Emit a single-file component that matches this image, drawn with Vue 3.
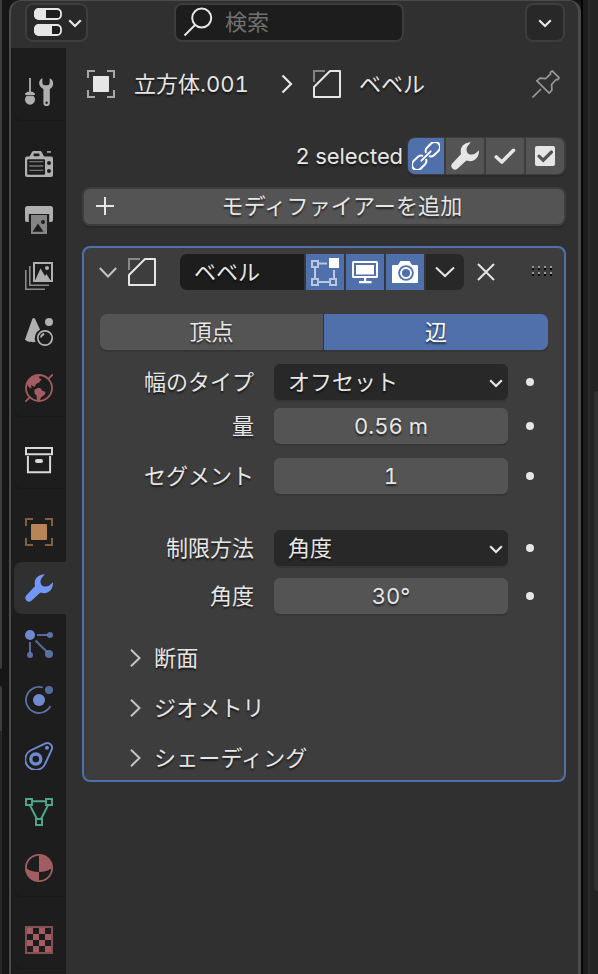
<script setup>
import { ref } from "vue";

const wrench =
  '<path d="M19.8 .2C14 .4 9.6 4 9.7 9.2c0 1.6.4 2.8.4 2.8L1.2 21.6a3.7 3.7 0 0 0 5.2 5.2l9-8.2c1 .4 2 .6 3.6.6 5.400 0 9.200-4.700 9-10.900-1.500 1.200-2.800 3-4.600 3.800-2 .9-5 .5-6.300-.7-1.700-1.500-2.100-4.800-.8-6.700C17.200 3 18.800 1.600 19.800 .2z" fill="currentColor"/>';

const icons = {
  wrench,
  tool: `<path d="M5 0v14" stroke="currentColor" stroke-width="1.8"/>
    <path d="M2.500 13.800h5l2.500 1.600v1.200l-1.800 1.200A5 5 0 1 1 1.800 17.800L0 16.600v-1.200z" fill="currentColor"/>
    <path d="M0 17.600h10" stroke="#1d1d1d" stroke-width=".8"/>
    <path d="M17.400.2C13 2 12.800 8.600 18.400 11v14a3.200 3.200 0 0 0 6.400 0V11C29.400 8.600 29.200 2 24.700.2V5a2.500 2.500 0 0 1-2.500 2.200h-2.300A2.500 2.500 0 0 1 17.400 5z" fill="currentColor"/>
    <circle cx="21.600" cy="24.800" r="1.200" fill="#1d1d1d"/>`,
  render: `<path d="M4 7.500 7 2q.6-1 1.800-1H15q1.200 0 1.700 1L19.500 7.500z" fill="currentColor"/>
    <rect x="8.500" y="3.600" width="6" height="3" rx="1" fill="#1d1d1d"/>
    <rect x="22" y="1.200" width="4" height="1.500" fill="currentColor"/>
    <rect y="6.500" width="28" height="20.500" rx="2" fill="currentColor"/>
    <rect x="2.200" y="9.200" width="17.800" height="15.500" rx="1" fill="#1d1d1d"/>
    <path d="M4.300 11.700h14M4.300 16h14M4.300 20.400h14" stroke="#777" stroke-width="1.300"/>
    <circle cx="24" cy="13" r="2" fill="#1d1d1d"/><circle cx="24" cy="21" r="2" fill="#1d1d1d"/>`,
  output: `<path d="M2.500 0h23A2.500 2.500 0 0 1 28 2.500V14q0 2-2 2h-1.800V8H3.800v8H2q-2 0-2-2V2.500A2.500 2.500 0 0 1 2.500 0z" fill="currentColor"/>
    <path d="M6 9h16v19H6z" fill="#858585"/>
    <path d="M7.500 25.800 13 17.500l5.500 8.300z" fill="#1d1d1d"/><circle cx="18" cy="16" r="2" fill="#1d1d1d"/>`,
  layers: `<path d="M.8 8v19.200H20M4.800 4v19.200H24" fill="none" stroke="#8a8a8a" stroke-width="1.600"/>
    <rect x="9" y="1" width="18" height="18" fill="none" stroke="currentColor" stroke-width="2"/>
    <path d="M10 18.500 15.500 6.500 20 14l1.500-2L25.500 18.500z" fill="currentColor"/><circle cx="22" cy="6" r="2" fill="currentColor"/>`,
  scene: `<path d="M8.700 0q1 0 1.500 1.200L15 11.500A10 10 0 0 0 10.500 24C6 24.500 1 23.500 0 21.500L7.200 1.200Q7.700 0 8.700 0z" fill="currentColor"/>
    <circle cx="24" cy="4" r="4" fill="currentColor"/>
    <circle cx="20" cy="20" r="7.200" fill="none" stroke="currentColor" stroke-width="1.700"/>
    <path d="M16 19.500a4 4 0 0 1 3.200-3.500" fill="none" stroke="currentColor" stroke-width="1.800"/>`,
  world: `<circle cx="14" cy="14" r="13" fill="none" stroke="currentColor" stroke-width="1.800"/>
    <path d="M28 .2 23.800 4.400M.2 27.800 4.400 23.600" stroke="currentColor" stroke-width="1.800"/>
    <path d="M4 6 8 2.500 14.500 2l-.5 2 2.500 1.500-2.500 3-3 1.500-1.500 3-3.500-2 .5 3.500-3-1.500L2 9.500z" fill="currentColor"/>
    <path d="M9.500 15.500l4-1.800 2.500.8 1 2 3.500 1.500-1 3-3 2-2.500 4-2-.5-.5-5-2-2z" fill="currentColor"/>`,
  collection: `<path d="M1 2h26v6.200H1zM2.900 10v16.200h22.200V10" fill="none" stroke="currentColor" stroke-width="2"/>
    <rect x="10" y="13" width="8" height="4" rx="2" fill="currentColor"/>`,
  object: `<path d="M1 8V1h7M20 1h7v7M27 20v7h-7M8 27H1v-7" fill="none" stroke="currentColor" stroke-width="2" opacity=".65"/>
    <rect x="6" y="6" width="16" height="16" rx=".8" fill="currentColor"/>`,
  particles: `<g opacity=".7" stroke="currentColor" stroke-width="2"><path d="M12 5h11M5 12v11M10.500 10.500 22 22"/></g>
    <g fill="currentColor"><circle cx="5" cy="5" r="5"/><g opacity=".75"><circle cx="25" cy="5" r="3"/><circle cx="5" cy="25" r="3"/><circle cx="24" cy="24" r="4"/></g></g>`,
  physics: `<path d="M17.700 1.500A13 13 0 1 0 25.500 20" fill="none" stroke="currentColor" stroke-width="1.800" opacity=".75"/>
    <circle cx="14" cy="14" r="6" fill="currentColor"/><circle cx="24" cy="4" r="4" fill="currentColor" opacity=".7"/>`,
  constraint: `<path d="M20.500 1.400 5.500 8.500A10.400 10.400 0 1 0 20.300 21.500L26.800 7.500A4.800 4.800 0 0 0 20.500 1.400z" fill="none" stroke="currentColor" stroke-width="1.900"/>
    <circle cx="10.800" cy="17" r="5" fill="none" stroke="currentColor" stroke-width="3.300"/><circle cx="22" cy="5.700" r="2" fill="currentColor"/>`,
  mesh: `<path d="M1 1h6v6H1zM21 1h6v6h-6zM11 21h6v6h-6zM7 3.200h14M4.800 7 12 21M23.200 7 16 21" fill="none" stroke="currentColor" stroke-width="1.900"/>`,
  material: `<circle cx="14" cy="14" r="13.100" fill="none" stroke="currentColor" stroke-width="1.800"/>
    <path d="M14 1A13 13 0 0 1 27 14Q22 18 14 18zM14 27A13 13 0 0 1 1 14Q6 18 14 18z" fill="currentColor"/>`,
  texture: `<rect x="1" y="1" width="26" height="26" fill="none" stroke="currentColor" stroke-width="2" opacity=".8"/>
    <path d="M2 2h6v6H2zM14 2h6v6h-6zM8 8h6v6H8zM20 8h6v6h-6zM2 14h6v6H2zM14 14h6v6h-6zM8 20h6v6H8zM20 20h6v6h-6z" fill="currentColor"/>`,
  bevel: `<path d="M1 12V1h11" fill="none" stroke="currentColor" stroke-width="2" opacity=".45"/>
    <path d="M17 1h10v26H1V17z" fill="none" stroke="currentColor" stroke-width="2" stroke-linejoin="round"/>`,
  pin: `<path d="M.5 27.500 9 19M20.200.8l7 7-1.400 1.900-1.700-.2-4.500 5 .3 5.500-2.700 3.200L4.900 10.900l3.100-2.700 5.500.4 5-4.500-.2-1.700z" fill="none" stroke="currentColor" stroke-width="1.700" stroke-linejoin="round"/>`,
  link: `<g transform="rotate(-45 14 14)" fill="none" stroke="currentColor" stroke-width="2" stroke-linecap="round">
    <path d="M11.500 11.200Q10 8.800 7.500 8.800H1.500a5.200 5.200 0 0 0 0 10.400h6q2.500 0 4-2.400M16.500 11.200Q18 8.800 20.500 8.800h6a5.200 5.200 0 0 1 0 10.400h-6q-2.500 0-4-2.400M7.500 14h13"/></g>`,
  check: `<path d="M5.300 15l5.500 5L22.500 8.300" fill="none" stroke="currentColor" stroke-width="3.600" stroke-linecap="round" stroke-linejoin="round"/>`,
  checkbox: `<rect x="4" y="4" width="20" height="20" rx="2" fill="currentColor"/>
    <path d="M8 14.200l4.200 4L20.500 10" fill="none" stroke="#545454" stroke-width="3.200" stroke-linecap="round"/>`,
  edit: `<g fill="none" stroke="#b9c6e2" stroke-width="2"><path d="M1 3h6v6H1zM1 21h6v6H1zM19 21h6v6h-6zM8 5.500h8M4 10v10M8 24h10M23 12v8"/></g>
    <path d="M18 0h10v10H18z" fill="currentColor"/>`,
  monitor: `<rect x="2" y="4" width="24" height="15" rx=".5" fill="none" stroke="currentColor" stroke-width="2"/>
    <path d="M5 7h18v9.500H5zM13 20h2.200v3H13zM8 23h12.500v2.200H8z" fill="currentColor"/>`,
  camera: `<path d="M1 8q0-1 1-1h5l2.500-4h9L21 7h5q1 0 1 1v17H1z" fill="currentColor"/>
    <circle cx="15" cy="15" r="7.800" fill="#5070ab"/><circle cx="15" cy="15" r="5" fill="none" stroke="currentColor" stroke-width="1.900"/>`,
};

const tabGroups = [
  [{ icon: "tool", color: "gray" }],
  [
    { icon: "render", color: "gray" },
    { icon: "output", color: "gray" },
    { icon: "layers", color: "gray" },
    { icon: "scene", color: "gray" },
    { icon: "world", color: "red" },
  ],
  [{ icon: "collection", color: "white" }],
  [
    { icon: "object", color: "orange" },
    { icon: "wrench", color: "bright" },
    { icon: "particles", color: "blue" },
    { icon: "physics", color: "blue" },
    { icon: "constraint", color: "blue" },
    { icon: "mesh", color: "green" },
    { icon: "material", color: "red" },
  ],
  [{ icon: "texture", color: "red" }],
];

const activeTab = ref("wrench");
const affect = ref("辺");

const rows = [
  { label: "幅のタイプ", value: "オフセット", select: true },
  { label: "量", value: "0.56 m" },
  { label: "セグメント", value: "1", cls: "spaced" },
  { label: "制限方法", value: "角度", select: true, cls: "section" },
  { label: "角度", value: "30°", cls: "loose" },
];

const subPanels = ["断面", "ジオメトリ", "シェーディング"];
</script>

<template>
  <div class="screen">
    <div class="edge-left">
      <div class="edge-top"></div>
      <div class="edge-bottom"></div>
    </div>

    <div class="editor">
      <header class="header">
        <button class="head-btn type-btn">
          <svg width="28" height="28" viewBox="0 0 28 28">
            <rect x="1" y="1" width="26" height="10" rx="4" fill="#1d1d1d" stroke="#e6e6e6" stroke-width="1.800" />
            <path d="M12 0H5a5 5 0 0 0-5 5v2a5 5 0 0 0 5 5h7z" fill="#e6e6e6" />
            <rect x="1" y="17" width="26" height="10" rx="4" fill="#1d1d1d" stroke="#e6e6e6" stroke-width="1.800" />
            <path d="M18 16H5a5 5 0 0 0-5 5v2a5 5 0 0 0 5 5h13z" fill="#e6e6e6" />
          </svg>
          <svg class="caret" width="14" height="9" viewBox="0 0 14 9"><path d="M1.200 1.200 7 7l5.800-5.800" /></svg>
        </button>
        <div class="search">
          <svg width="30" height="30" viewBox="0 0 30 30" fill="none" stroke="#e6e6e6" stroke-width="2">
            <circle cx="18.700" cy="11" r="9.500" />
            <path d="M12 18 1.500 28.500" />
          </svg>
          <span>検索</span>
        </div>
        <button class="head-btn options-btn">
          <svg class="caret" width="14" height="9" viewBox="0 0 14 9"><path d="M1.200 1.200 7 7l5.800-5.800" /></svg>
        </button>
      </header>

      <div class="main">
        <nav class="tabs">
          <div v-for="(group, i) in tabGroups" :key="i" class="tab-group">
            <div
              v-for="tab in group"
              :key="tab.icon"
              class="tab"
              :class="[tab.color, { active: tab.icon === activeTab }]"
              @click="activeTab = tab.icon"
            >
              <svg width="28" height="28" viewBox="0 0 28 28" v-html="icons[tab.icon]"></svg>
            </div>
          </div>
        </nav>

        <section class="body">
          <div class="crumbs">
            <svg width="28" height="28" viewBox="0 0 28 28" v-html="icons.object"></svg>
            <span class="crumb-object">立方体.001</span>
            <svg class="crumb-sep" width="12" height="20" viewBox="0 0 12 20"><path d="M1.500 1.500 10 10l-8.500 8.500" /></svg>
            <svg width="28" height="28" viewBox="0 0 28 28" v-html="icons.bevel"></svg>
            <span class="crumb-mod">ベベル</span>
            <svg class="pin" width="28" height="28" viewBox="0 0 28 28" v-html="icons.pin"></svg>
          </div>

          <div class="selected">
            <span>2 selected</span>
            <div class="tools">
              <div
                v-for="name in ['link', 'wrench', 'check', 'checkbox']"
                :key="name"
                class="tool"
                :class="{ on: name === 'link' }"
              >
                <svg width="28" height="28" viewBox="0 0 28 28" v-html="icons[name]"></svg>
              </div>
            </div>
          </div>

          <button class="add">
            <svg width="18" height="18" viewBox="0 0 18 18"><path d="M9 0v18M0 9h18" /></svg>
            <span>モディファイアーを追加</span>
          </button>

          <div class="panel">
            <div class="panel-head">
              <svg class="chev" width="18" height="11" viewBox="0 0 18 11"><path d="M.8 1 9 9.500 17.200 1" /></svg>
              <svg class="mod-icon" width="28" height="28" viewBox="0 0 28 28" v-html="icons.bevel"></svg>
              <div class="controls">
                <div class="name">ベベル</div>
                <div v-for="name in ['edit', 'monitor', 'camera']" :key="name" class="mode">
                  <svg width="28" height="28" viewBox="0 0 28 28" v-html="icons[name]"></svg>
                </div>
                <div class="more">
                  <svg width="20" height="12" viewBox="0 0 20 12"><path d="M1 1.500 10 10l9-8.500" /></svg>
                </div>
              </div>
              <svg class="close" width="18" height="18" viewBox="0 0 18 18"><path d="M1 1l16 16M17 1 1 17" /></svg>
              <div class="grip"><i v-for="n in 8" :key="n"></i></div>
            </div>

            <div class="toggle">
              <div
                v-for="item in ['頂点', '辺']"
                :key="item"
                class="option"
                :class="{ on: item === affect }"
                @click="affect = item"
              >
                {{ item }}
              </div>
            </div>

            <div v-for="row in rows" :key="row.label" class="row" :class="row.cls">
              <label>{{ row.label }}</label>
              <div class="field" :class="{ select: row.select }">
                <span>{{ row.value }}</span>
                <svg v-if="row.select" class="caret" width="14" height="9" viewBox="0 0 14 9">
                  <path d="M1.200 1.200 7 7l5.800-5.800" />
                </svg>
              </div>
              <i class="dot"></i>
            </div>

            <div class="subs">
              <div v-for="sub in subPanels" :key="sub" class="sub">
                <svg class="chev" width="11" height="18" viewBox="0 0 11 18"><path d="M1 .8 9.500 9 1 17.200" /></svg>
                <span>{{ sub }}</span>
              </div>
            </div>
          </div>
        </section>
      </div>
    </div>

    <div class="edge-right">
      <div class="edge-strip"></div>
    </div>
  </div>
</template>

<style>
body {
  margin: 0;
  background: #161616;
}
</style>

<style scoped>
.screen {
  display: flex;
  width: 598px;
  height: 974px;
  overflow: hidden;
  background: #161616;
  color: #e6e6e6;
  font-family: Inter, "Noto Sans CJK JP", sans-serif;
  font-size: 22px;
  font-feature-settings: "tnum";
  line-height: 36px;
  text-shadow: 0 2px 2px rgba(0, 0, 0, 0.6);
  white-space: nowrap;
}

.screen * {
  box-sizing: border-box;
}

svg {
  flex: none;
  display: block;
}

button {
  padding: 0;
  font: inherit;
  color: inherit;
  text-shadow: inherit;
}

.edge-left {
  width: 9px;
  display: flex;
  flex-direction: column;
  justify-content: space-between;
}

.edge-top,
.edge-bottom {
  width: 2px;
  background: #3c3c3c;
}

.edge-top {
  height: 669px;
  border-bottom-right-radius: 2px;
}

.edge-bottom {
  height: 288px;
  border-top-right-radius: 2px;
  background: linear-gradient(#3c3c3c 45px, #282828 45px);
}

.editor {
  width: 572px;
  display: flex;
  flex-direction: column;
  border: solid #4a4a4a;
  border-width: 1px 3px 0 2px;
  border-radius: 12px 12px 0 0;
  background: #303030;
  overflow: hidden;
}

.edge-right {
  flex: 1;
  display: flex;
  justify-content: flex-end;
  align-items: flex-start;
  border-left: 2px solid #060606;
  background: linear-gradient(90deg, #1c1c1c 5px, #2b2b2b 5px, #2b2b2b 7px, #232323 7px);
}

.edge-strip {
  width: 4px;
  height: 500px;
  margin-top: 391px;
  border-radius: 3px 0 0 3px;
  background: #303030;
}

.header {
  height: 47px;
  display: flex;
  align-items: flex-start;
  padding: 2px 13px 0 14px;
}

.head-btn,
.search {
  height: 39px;
  display: flex;
  align-items: center;
  border: 2px solid #3d3d3d;
  border-radius: 8px;
  background: #282828;
}

.type-btn {
  width: 63px;
  padding-left: 7px;
  gap: 6px;
}

.type-btn svg,
.options-btn svg {
  margin-top: -1px;
}

.search {
  width: 230px;
  margin-left: 86px;
  padding: 0 0 2px 7px;
  background: #1d1d1d;
  color: #707070;
  text-shadow: none;
}

.search span {
  margin-left: 12px;
}

.options-btn {
  width: 40px;
  margin-left: auto;
  justify-content: center;
}

.caret {
  fill: none;
  stroke: #e6e6e6;
  stroke-width: 2.2;
  position: relative;
  top: 1px;
}

.main {
  flex: 1;
  display: flex;
}

.tabs {
  width: 55px;
  display: flex;
  flex-direction: column;
  padding: 16px 0 0 3px;
  gap: 16px;
  background: #1d1d1d;
}

.tab-group {
  display: flex;
  flex-direction: column;
  gap: 4px;
  padding: 2px 0;
  border-radius: 0 0 0 8px;
  box-shadow: 0 1px 0 #191919;
}

.tab {
  height: 52px;
  display: flex;
  align-items: center;
  padding-left: 11px;
  border-radius: 8px 0 0 8px;
}

.tab.active {
  background: #303030;
}

.gray {
  color: #b0b0b0;
}

.white {
  color: #d8d8d8;
}

.red {
  color: #a35d62;
}

.orange {
  color: #b98557;
}

.bright {
  color: #7297f4;
}

.blue {
  color: #6f8bd0;
}

.green {
  color: #4fa888;
}

.body {
  flex: 1;
  padding: 16px 12px 0 16px;
}

.crumbs {
  height: 40px;
  display: flex;
  align-items: center;
  padding: 0 6px 0 5px;
}

.crumb-object {
  width: 166px;
  padding-left: 19px;
}

.crumb-sep {
  margin-right: 20px;
  fill: none;
  stroke: #e6e6e6;
  stroke-width: 2.2;
}

.crumb-mod {
  margin-left: 18px;
}

.pin {
  margin-left: auto;
  color: #989898;
}

.selected {
  height: 38px;
  margin-top: 33px;
  display: flex;
  align-items: center;
  justify-content: flex-end;
  gap: 4px;
  letter-spacing: -0.1px;
}

.tools {
  display: flex;
  gap: 2px;
  padding: 1px 2px 1px 1px;
  border-radius: 8px;
  background: #3d3d3d;
  box-shadow: 0 2px 0 #2a2a2a;
}

.tool {
  width: 38px;
  height: 36px;
  display: flex;
  align-items: center;
  justify-content: center;
  background: #545454;
}

.tool.on {
  width: 36px;
  color: #fff;
  background: #5070ab;
}

.tool:first-child {
  border-radius: 7px 0 0 7px;
}

.tool:last-child {
  border-radius: 0 7px 7px 0;
}

.add {
  width: 484px;
  height: 39px;
  margin-top: 12px;
  display: flex;
  align-items: center;
  padding: 0 0 2px 12px;
  border: 2px solid #3d3d3d;
  border-radius: 8px;
  background: #545454;
  box-shadow: 0 2px 0 #2a2a2a;
}

.add svg {
  stroke: #e6e6e6;
  stroke-width: 2;
}

.add span {
  flex: 1;
  padding-left: 6px;
  text-align: center;
  letter-spacing: 0.15px;
}

.panel {
  width: 484px;
  height: 536px;
  margin-top: 20px;
  padding: 6px 16px 0;
  border: 2px solid #5070ab;
  border-radius: 8px;
  background: #3d3d3d;
}

.panel-head {
  height: 36px;
  display: flex;
  align-items: center;
}

.chev {
  fill: none;
  stroke: #c4c4c4;
  stroke-width: 2;
}

.panel-head .chev {
  margin-left: -1px;
}

.mod-icon {
  margin-left: 11px;
}

.controls {
  flex: none;
  display: flex;
  gap: 2px;
  height: 36px;
  margin-left: 24px;
  border-radius: 7px;
  overflow: hidden;
  background: #363636;
}

.name {
  width: 124px;
  padding-left: 14px;
  background: #1d1d1d;
}

.mode,
.more {
  width: 38px;
  display: flex;
  align-items: center;
  justify-content: center;
  color: #fff;
  background: #5070ab;
}

.more {
  background: #282828;
}

.more svg,
.close {
  fill: none;
  stroke: #e6e6e6;
  stroke-width: 2;
}

.close {
  margin-left: 13px;
}

.grip {
  flex: none;
  display: grid;
  grid-template-columns: repeat(4, 2px);
  gap: 4px;
  margin: -4px 0 0 37px;
}

.grip i {
  width: 2px;
  height: 2px;
  background: #999;
  box-shadow: 0 2px 0 #080808;
}

.toggle {
  display: flex;
  gap: 1px;
  margin: 24px 0 14px;
  border-radius: 7px;
  background: #333;
  box-shadow: 0 2px 0 #363636;
}

.option {
  width: 223px;
  height: 36px;
  text-align: center;
  background: #545454;
  border-radius: 7px 0 0 7px;
}

.option:last-child {
  width: 224px;
  border-radius: 0 7px 7px 0;
}

.option.on {
  color: #fff;
  background: #5070ab;
}

.row {
  height: 36px;
  display: flex;
  align-items: center;
  margin-bottom: 8px;
}

.row.spaced {
  margin-top: 14px;
}

.row.section {
  margin-top: 36px;
}

.row.loose {
  margin-top: 12px;
}

.row label {
  width: 154px;
  text-align: right;
}

.field {
  width: 234px;
  height: 36px;
  margin-left: 20px;
  text-align: center;
  border-radius: 6px;
  background: #545454;
  box-shadow: 0 2px 0 #363636;
}

.field.select {
  display: flex;
  align-items: center;
  justify-content: space-between;
  padding: 0 5px 0 14px;
  background: #282828;
}

.dot {
  width: 8px;
  height: 8px;
  margin-left: 18px;
  border-radius: 50%;
  background: #e6e6e6;
}

.subs {
  margin-top: 19px;
}

.sub {
  height: 50px;
  display: flex;
  align-items: center;
  padding-left: 30px;
  gap: 13px;
  letter-spacing: 0.15px;
}
</style>
